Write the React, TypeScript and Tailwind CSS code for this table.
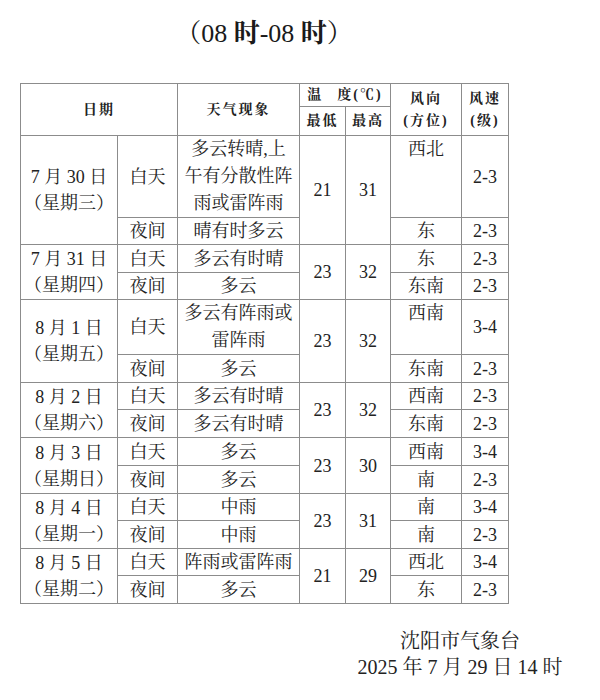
import React from 'react'

type Day = {
  date: string
  week: string
  dayWeather: string[]
  nightWeather: string
  low: string
  high: string
  dayDir: string
  nightDir: string
  daySpeed: string
  nightSpeed: string
  dayH: number
  nightH: number
}

const days: Day[] = [
  {
    date: '7 月 30 日',
    week: '（星期三）',
    dayWeather: ['多云转晴,上', '午有分散性阵', '雨或雷阵雨'],
    nightWeather: '晴有时多云',
    low: '21',
    high: '31',
    dayDir: '西北',
    nightDir: '东',
    daySpeed: '2-3',
    nightSpeed: '2-3',
    dayH: 82,
    nightH: 27,
  },
  {
    date: '7 月 31 日',
    week: '（星期四）',
    dayWeather: ['多云有时晴'],
    nightWeather: '多云',
    low: '23',
    high: '32',
    dayDir: '东',
    nightDir: '东南',
    daySpeed: '2-3',
    nightSpeed: '2-3',
    dayH: 28,
    nightH: 27,
  },
  {
    date: '8 月 1 日',
    week: '（星期五）',
    dayWeather: ['多云有阵雨或', '雷阵雨'],
    nightWeather: '多云',
    low: '23',
    high: '32',
    dayDir: '西南',
    nightDir: '东南',
    daySpeed: '3-4',
    nightSpeed: '2-3',
    dayH: 54,
    nightH: 28,
  },
  {
    date: '8 月 2 日',
    week: '（星期六）',
    dayWeather: ['多云有时晴'],
    nightWeather: '多云有时晴',
    low: '23',
    high: '32',
    dayDir: '西南',
    nightDir: '东南',
    daySpeed: '2-3',
    nightSpeed: '2-3',
    dayH: 27,
    nightH: 28,
  },
  {
    date: '8 月 3 日',
    week: '（星期日）',
    dayWeather: ['多云'],
    nightWeather: '多云',
    low: '23',
    high: '30',
    dayDir: '西南',
    nightDir: '南',
    daySpeed: '3-4',
    nightSpeed: '2-3',
    dayH: 28,
    nightH: 28,
  },
  {
    date: '8 月 4 日',
    week: '（星期一）',
    dayWeather: ['中雨'],
    nightWeather: '中雨',
    low: '23',
    high: '31',
    dayDir: '南',
    nightDir: '南',
    daySpeed: '3-4',
    nightSpeed: '2-3',
    dayH: 27,
    nightH: 28,
  },
  {
    date: '8 月 5 日',
    week: '（星期二）',
    dayWeather: ['阵雨或雷阵雨'],
    nightWeather: '多云',
    low: '21',
    high: '29',
    dayDir: '西北',
    nightDir: '东',
    daySpeed: '3-4',
    nightSpeed: '2-3',
    dayH: 27,
    nightH: 28,
  },
]

const cell = 'border border-[#8c8c8c] p-0 text-center align-middle'
const head = 'border border-[#8c8c8c] p-0 text-center align-middle text-[14px] font-bold tracking-[2px]'

export default function App() {
  return (
    <div
      className="w-[600px] h-[700px] bg-white text-[#222]"
      style={{ fontFamily: '"Liberation Serif", "Noto Serif CJK SC", "Noto Sans CJK SC", serif' }}
    >
      <div className="w-[528px] pt-[17px] text-center text-[26px] leading-[33px] font-normal text-[#1a1a1a]">
        （08 <span className="font-bold">时</span>-08 <span className="font-bold">时</span>）
      </div>

      <table className="ml-[20px] mt-[33px] w-[488px] table-fixed border-collapse text-[18px] leading-[24px]">
        <colgroup>
          <col className="w-[97px]" />
          <col className="w-[60px]" />
          <col className="w-[122px]" />
          <col className="w-[46px]" />
          <col className="w-[45px]" />
          <col className="w-[71px]" />
          <col className="w-[47px]" />
        </colgroup>
        <thead>
          <tr className="h-[23px]">
            <th colSpan={2} rowSpan={2} className={head}>
              日期
            </th>
            <th rowSpan={2} className={head}>
              天气现象
            </th>
            <th colSpan={2} className={head + ' leading-[20px]'}>
              温<span className="inline-block w-[14px]" />度(℃)
            </th>
            <th rowSpan={2} className={head + ' leading-[22px]'}>
              风向
              <br />
              (方位)
            </th>
            <th rowSpan={2} className={head + ' leading-[22px]'}>
              风速
              <br />
              (级)
            </th>
          </tr>
          <tr className="h-[29px]">
            <th className={head}>最低</th>
            <th className={head}>最高</th>
          </tr>
        </thead>
        <tbody>
          {days.map((d) => {
            const tall = d.dayWeather.length > 1
            return (
              <React.Fragment key={d.date}>
                <tr style={{ height: d.dayH }}>
                  <td rowSpan={2} className={cell + ' leading-[26px]'}>
                    {d.date}
                    <br />
                    {d.week}
                  </td>
                  <td className={cell}>白天</td>
                  <td className={cell + (tall ? ' leading-[27px]' : '')}>
                    {d.dayWeather.map((l, i) => (
                      <div key={i}>{l}</div>
                    ))}
                  </td>
                  <td rowSpan={2} className={cell}>
                    {d.low}
                  </td>
                  <td rowSpan={2} className={cell}>
                    {d.high}
                  </td>
                  <td className={cell + (tall ? ' !align-top leading-[27px]' : '')}>{d.dayDir}</td>
                  <td className={cell}>{d.daySpeed}</td>
                </tr>
                <tr style={{ height: d.nightH }}>
                  <td className={cell}>夜间</td>
                  <td className={cell}>{d.nightWeather}</td>
                  <td className={cell}>{d.nightDir}</td>
                  <td className={cell}>{d.nightSpeed}</td>
                </tr>
              </React.Fragment>
            )
          })}
        </tbody>
      </table>

      <div className="ml-[340px] mt-[24px] w-[240px] text-center text-[20px] leading-[26px]">
        <div>沈阳市气象台</div>
        <div>2025 年 7 月 29 日 14 时</div>
      </div>
    </div>
  )
}
